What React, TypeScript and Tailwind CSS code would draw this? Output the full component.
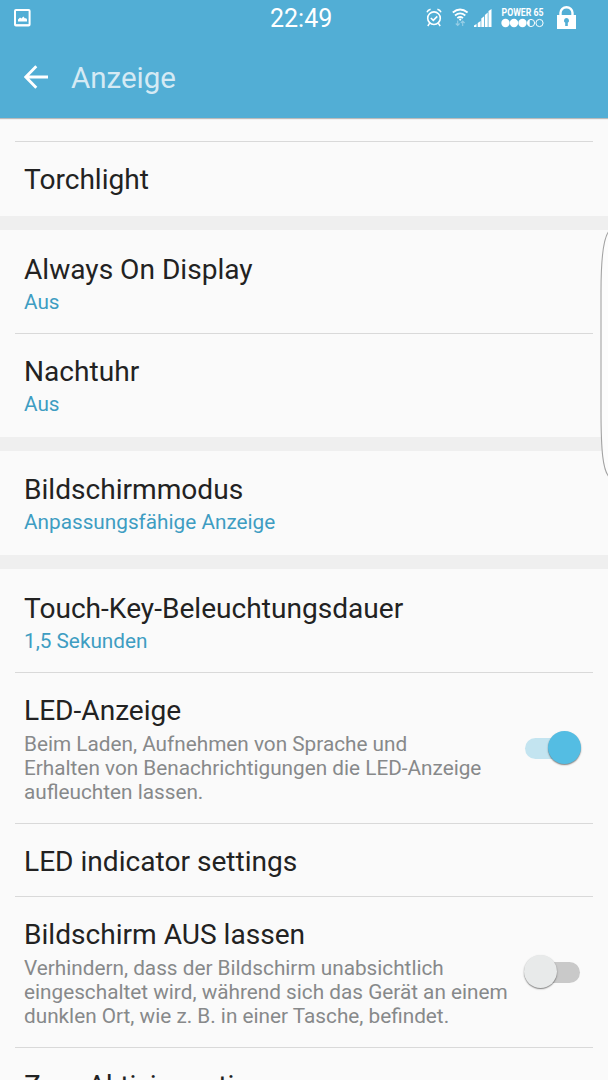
import { useState, type ReactNode } from 'react';
import clsx from 'clsx';

export default function App() {
  return (
    <div className="relative flex h-[1080px] w-[608px] flex-col overflow-hidden bg-[#fafafa] font-[Roboto,sans-serif]">
      <header className="z-10 h-[118px] shrink-0 bg-[#52aed5] shadow-[0_1px_1px_rgba(0,0,0,0.25)]">
        <StatusBar />
        <div className="flex h-[80px] items-center pl-6">
          <button type="button" aria-label="Zurück" className="mb-[2px] block">
            <svg width="24" height="24" viewBox="0 0 24 24" fill="none" stroke="#fff" strokeWidth="2.8">
              <path d="M12.3 1.2 1.8 12l10.5 10.8M2 12h22" />
            </svg>
          </button>
          <h1 className="ml-[23px] text-[29.5px] leading-[36px] text-[#d5eaf4]">Anzeige</h1>
        </div>
      </header>

      <main className="shrink-0">
        <div className="h-[23px]" />
        <Divider />
        <Row title="Torchlight" className="h-[74px] py-[21px]" />
        <Gap />
        <Row title="Always On Display" value="Aus" className="h-[103px] py-[23px]" />
        <Divider />
        <Row title="Nachtuhr" value="Aus" className="h-[103px] py-[21px]" />
        <Gap />
        <Row title="Bildschirmmodus" value="Anpassungsfähige Anzeige" className="h-[104px] py-[22px]" />
        <Gap />
        <Row title="Touch-Key-Beleuchtungsdauer" value="1,5 Sekunden" className="h-[103px] py-[23px]" />
        <Divider />
        <Row title="LED-Anzeige" className="h-[150px] py-[21px]" control={<Switch defaultOn label="LED-Anzeige" />}>
          Beim Laden, Aufnehmen von Sprache und<br />
          Erhalten von Benachrichtigungen die LED-Anzeige<br />
          aufleuchten lassen.
        </Row>
        <Divider />
        <Row title="LED indicator settings" className="h-[72px] py-[21px]" />
        <Divider />
        <Row title="Bildschirm AUS lassen" className="h-[150px] py-[21px]" control={<Switch label="Bildschirm AUS lassen" />}>
          Verhindern, dass der Bildschirm unabsichtlich<br />
          eingeschaltet wird, während sich das Gerät an einem<br />
          dunklen Ort, wie z. B. in einer Tasche, befindet.
        </Row>
        <Divider />
        <Row title="Zum Aktivieren tippen" className="h-[103px] py-[21px]" />
      </main>

      {/* edge panel handle */}
      <svg className="absolute top-[230px] right-0" width="9" height="250" viewBox="0 0 9 250">
        <path
          d="M10 1C4 8 2 30 2 62V180C2 222 4 240 10 247Z"
          fill="#fcfcfc" stroke="#a3a3a3" strokeWidth="1.1"
        />
      </svg>
    </div>
  );
}

function Divider() {
  return <div className="mx-[15px] h-px bg-[#d9d9d9]" />;
}

function Gap() {
  return <div className="h-[14px] bg-[#efefef]" />;
}

function Row({ title, value, className, control, children }: {
  title: string; value?: string; className: string; control?: ReactNode; children?: ReactNode;
}) {
  return (
    <section className={clsx('flex justify-between pl-6 pr-[27px]', className)}>
      <div className="whitespace-nowrap">
        <h2 className="text-[28.1px] leading-[33px] text-[#222]">{title}</h2>
        {value && <p className="mt-1 text-[20.75px] leading-6 text-[#3e9dc2]">{value}</p>}
        {children && <p className="mt-[5px] text-[20.75px] leading-6 text-[#87898a]">{children}</p>}
      </div>
      {control && <div className="flex items-center">{control}</div>}
    </section>
  );
}

function Switch({ defaultOn = false, label }: { defaultOn?: boolean; label: string }) {
  const [on, setOn] = useState(defaultOn);

  return (
    <button
      type="button" role="switch" aria-checked={on} aria-label={label}
      onClick={() => setOn(!on)}
      className="relative -ml-8 flex h-[34px] w-[58px] items-center"
    >
      <span className={clsx('h-[21px] w-[54px] rounded-full', on ? 'ml-[2px] bg-[#c3e4f0]' : 'ml-[3px] bg-[#c9c9c9]')} />
      <span
        className={clsx(
          'absolute top-0 size-[33px] rounded-full shadow-[0_1px_1.5px_rgba(0,0,0,0.5)]',
          on ? 'right-0 bg-[#54bde3]' : 'left-px bg-[#e8eaea]',
        )}
      />
    </button>
  );
}

function StatusBar() {
  return (
    <div className="relative flex h-[38px] items-start text-white">
      <svg className="mt-[9px] ml-[14px]" width="17" height="18" viewBox="0 0 17 18">
        <rect x="1" y="1" width="14.6" height="15.6" rx="1" fill="none" stroke="#fff" strokeWidth="2" />
        <path d="M1 15.2h15V17H1zM4 12.5V10.5l2-2 1.5 1 1.8-2 1.7 2 1-.5 1 1.5v2z" fill="#fff" />
      </svg>

      <span className="ml-[239px] mt-1 w-[64px] text-[25px] leading-[30px]">22:49</span>

      <svg className="mt-2 ml-[92px]" width="16" height="19" viewBox="0 0 16 19" fill="none" stroke="#fff">
        <circle cx="8" cy="10.2" r="6.3" strokeWidth="1.6" />
        <path d="M1 4.2Q1.8 2 4.6 1.2M15 4.2Q14.2 2 11.4 1.2M3.7 15.2 1.8 18M12.3 15.2l1.9 2.8" strokeWidth="1.5" />
        <path d="m4.8 10 2.5 2.4 4-4" strokeWidth="1.6" />
      </svg>

      <svg className="mt-2 ml-[10px]" width="17" height="19" viewBox="0 0 17 19" fill="none" stroke="#fff">
        <path d="M.8 4.5Q8 -1.4 15.6 4.5M3 7.5Q8.1 3.3 13.3 7.5M5.3 10.1Q8.2 7.8 11 10.1" strokeWidth="1.8" />
        <circle cx="8.2" cy="11.6" r="1.1" fill="#fff" stroke="none" />
        <path d="M5.7 12.5v5M3.8 15.5l1.9 2 1.9-2M10.7 18v-5M8.8 15l1.9-2 1.9 2" strokeWidth="1.1" opacity=".4" />
      </svg>

      <svg className="mt-[9px] ml-[5px]" width="18" height="18" viewBox="0 0 18 18" fill="#fff">
        <path d="M0 18v-1.5L2.5 15v3zM3.7 18v-4l2.9-2v6zM7.3 18V9.5l2.8-2.3V18zM10.9 18V6l2.8-2.5V18zM14.5 18V2l3-2v18z" />
      </svg>

      <div className="mt-[6px] ml-[9px] w-[43px]">
        <svg width="43" height="21" viewBox="0 -1 43 21" fill="#fff" className="overflow-visible">
          <text x="0.5" y="9.4" fontSize="10" fontWeight="700" textLength="42" lengthAdjust="spacingAndGlyphs">POWER 65</text>
          <circle cx="4.5" cy="16" r="4.2" />
          <circle cx="13" cy="16" r="4.2" />
          <circle cx="21.5" cy="16" r="4.2" />
          <circle cx="30" cy="16" r="3.6" fill="none" stroke="#fff" />
          <path d="M28.7 12.6a3.6 3.6 0 0 0 0 6.8z" />
          <circle cx="38.5" cy="16" r="3.6" fill="none" stroke="#fff" />
        </svg>
      </div>

      <svg className="mt-[6px] ml-[13px]" width="19" height="23" viewBox="0 0 19 23">
        <path d="M3.5 10V6.8a6 5.6 0 0 1 12 0V10" fill="none" stroke="#fff" strokeWidth="2.4" />
        <rect y="9" width="19" height="14" fill="#fff" />
        <path d="M9.5 12a2.6 2.6 0 0 1 1.3 4.8V20H8.2v-3.2A2.6 2.6 0 0 1 9.5 12z" fill="#52aed5" />
      </svg>
    </div>
  );
}
